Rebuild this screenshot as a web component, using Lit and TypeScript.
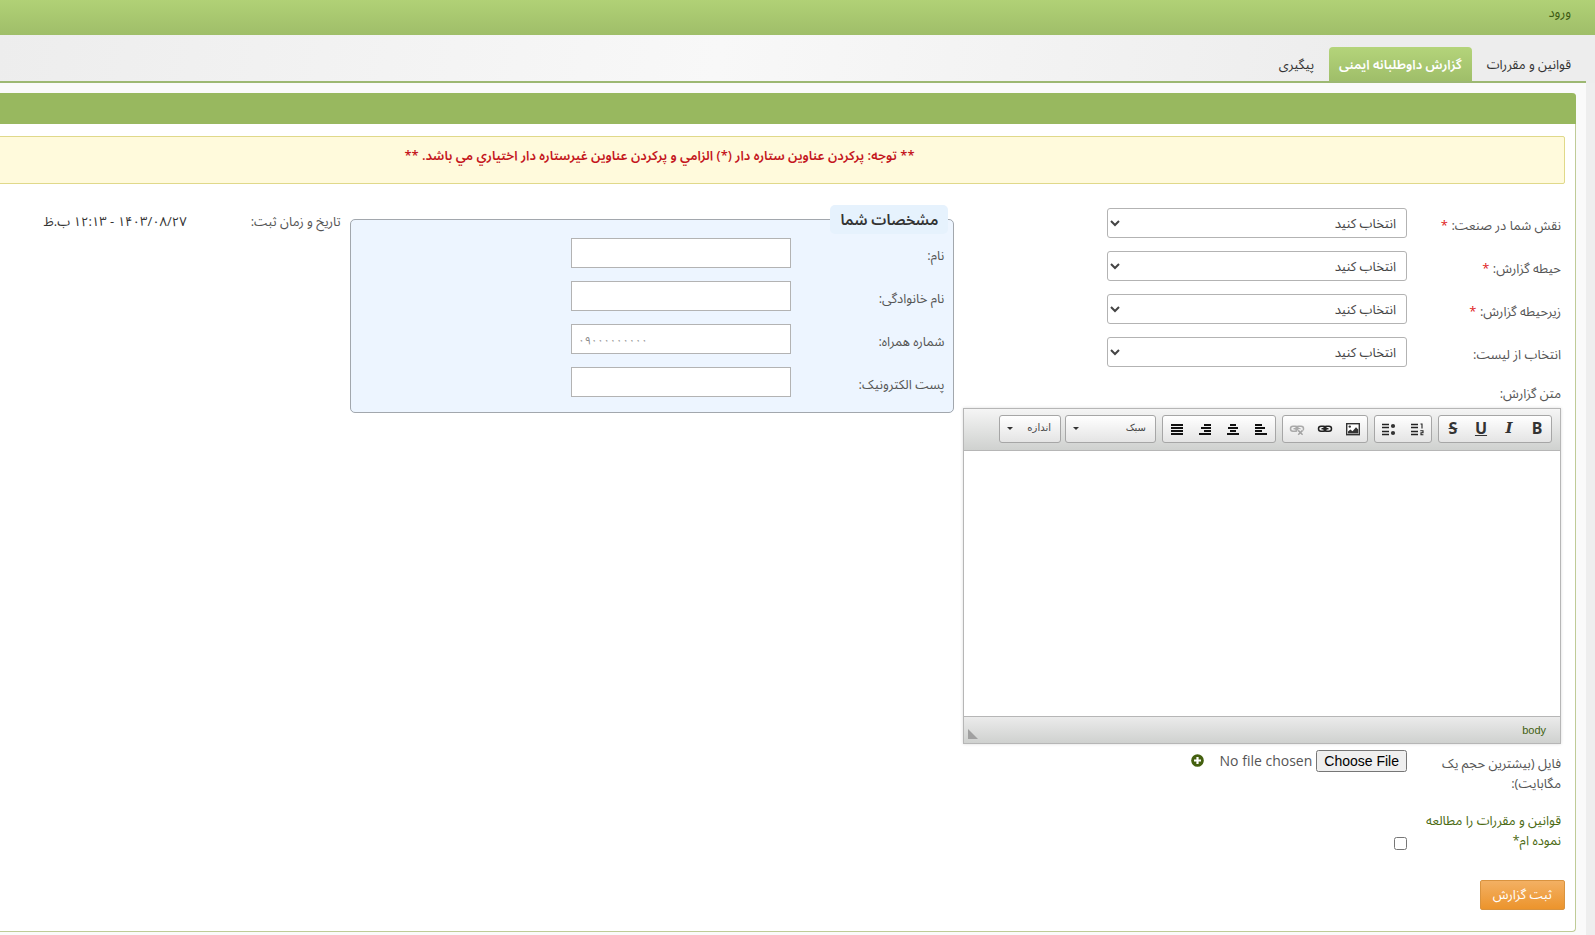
import { LitElement, html, css, svg } from "lit";
import { customElement } from "lit/decorators.js";

const icon = (body: unknown) =>
  html`<svg class="icon" width="16" height="16" viewBox="0 0 16 16" aria-hidden="true">${body}</svg>`;

const bars = (rows: number[][]) =>
  rows.map(([x, w], i) => svg`<rect x=${x} y=${3 + i * 3} width=${w} height="2" fill="#111"/>`);

const chain = (color: string) => svg`
  <g fill="none" stroke=${color} stroke-width="1.5">
    <rect x="1.5" y="5.2" width="7.5" height="5" rx="2.5"/>
    <rect x="7" y="5.2" width="7.5" height="5" rx="2.5"/>
    <path d="M4.5 7.7H11.5"/>
  </g>`;

const icons = {
  numbered: icon(svg`
    <path d="M2 3.5H9M2 6.5H9M2 10.5H9M2 13.5H9" stroke="#222" stroke-width="1.3"/>
    <path d="M11.5 3H13V7.5M11.3 9.8H14V11.8H12V13.7H14.4" fill="none" stroke="#222" stroke-width="1.1"/>`),
  bulleted: icon(svg`
    <path d="M1 3.5H8M1 6.5H8M1 10.5H8M1 13.5H8" stroke="#222" stroke-width="1.3"/>
    <circle cx="12" cy="5" r="2.1" fill="#333"/><circle cx="12" cy="12" r="2.1" fill="#333"/>`),
  image: icon(svg`
    <rect x="1.7" y="2.7" width="12.6" height="11" fill="#fff" stroke="#333" stroke-width="1.4"/>
    <circle cx="4.8" cy="5.6" r="1.2" fill="#333"/>
    <path d="M3 12.6V10.4L5.4 8.6L7.5 10.2L11 6.2L13.2 8.6V12.6Z" fill="#333"/>`),
  link: icon(chain("#222")),
  unlink: icon(svg`${chain("#aaa")}
    <path d="M9 9L14 14M14 9L9 14" stroke="#eee" stroke-width="3.4"/>
    <path d="M9.2 9.4L13.6 13.8M13.6 9.4L9.2 13.8" stroke="#a2a2a2" stroke-width="1.5"/>`),
  left: icon(bars([[2, 7], [2, 10], [2, 7], [2, 12]])),
  center: icon(bars([[5, 6], [3, 10], [5, 6], [2, 12]])),
  right: icon(bars([[7, 7], [4, 10], [7, 7], [2, 12]])),
  justify: icon(bars([[2, 12], [2, 12], [2, 12], [2, 12]])),
};

const roles = [
  { id: "role", label: "نقش شما در صنعت:", required: true },
  { id: "area", label: "حیطه گزارش:", required: true },
  { id: "subarea", label: "زیرحیطه گزارش:", required: true },
  { id: "list", label: "انتخاب از لیست:", required: false },
];

const person = [
  { id: "name", label: "نام:", type: "text", hint: "" },
  { id: "family", label: "نام خانوادگی:", type: "text", hint: "" },
  { id: "mobile", label: "شماره همراه:", type: "tel", hint: "۰۹۰۰۰۰۰۰۰۰۰" },
  { id: "email", label: "پست الکترونیک:", type: "email", hint: "" },
];

@customElement("rich-editor")
class RichEditor extends LitElement {
  static styles = css`
    :host { display: block; border: 1px solid #b6b6b6; box-shadow: 0 0 3px rgba(0, 0, 0, 0.15); background: #fff; }
    .toolbar {
      display: flex; gap: 6px; padding: 6px 8px 7px; border-bottom: 1px solid #b6b6b6;
      background: linear-gradient(#f5f5f5, #cfd1cf);
    }
    .combos { display: flex; gap: 4px; }
    .group, .combo {
      display: flex; box-sizing: border-box; height: 28px; border: 1px solid #a6a6a6; border-radius: 3px;
      background: linear-gradient(#fff, #e4e4e4);
    }
    .tool {
      display: flex; align-items: center; justify-content: center; width: 28px; height: 26px;
      padding: 0; border: 0; background: none; color: #333;
      font: bold 16px/16px "Noto Sans", "Open Sans", sans-serif;
    }
    .letter { padding-bottom: 2px; }
    .italic { font-family: "DejaVu Serif", serif; font-size: 15px; font-style: italic; }
    .underline { text-decoration: underline; }
    .strike { text-decoration: line-through; }
    .combo {
      align-items: center; justify-content: space-between; width: 91px; padding: 0 9px 2px 7px;
      font: 10px/16px "DejaVu Sans", sans-serif; color: #474747;
    }
    .small { width: 62px; }
    .arrow { border: 3px solid transparent; border-top-color: #333; border-bottom: 0; }
    .area {
      display: block; box-sizing: border-box; width: 100%; height: 265px; border: 0; padding: 20px;
      resize: none; background: #fff; outline: 0;
    }
    .status {
      display: flex; justify-content: space-between; align-items: center; height: 26px; padding: 0 14px 0 4px;
      border-top: 1px solid #b6b6b6; background: linear-gradient(#ebebeb, #cfd1cf);
    }
    .path { font: 11px/16px "Liberation Sans", sans-serif; color: #3f5f0f; text-decoration: none; }
    .grip { align-self: flex-end; margin-bottom: 4px; border: 5px solid #a0a0a0; border-top-color: transparent; border-right-color: transparent; }
  `;
  render() {
    return html`
      <div class="toolbar">
        <div class="group">
          <button type="button" class="tool letter">B</button>
          <button type="button" class="tool letter italic">I</button>
          <button type="button" class="tool letter underline">U</button>
          <button type="button" class="tool letter strike">S</button>
        </div>
        <div class="group">
          <button type="button" class="tool" aria-label="فهرست شماره‌دار">${icons.numbered}</button>
          <button type="button" class="tool" aria-label="فهرست نقطه‌ای">${icons.bulleted}</button>
        </div>
        <div class="group">
          <button type="button" class="tool" aria-label="تصویر">${icons.image}</button>
          <button type="button" class="tool" aria-label="پیوند">${icons.link}</button>
          <button type="button" class="tool" aria-label="حذف پیوند" disabled>${icons.unlink}</button>
        </div>
        <div class="group">
          <button type="button" class="tool" aria-label="چپ‌چین">${icons.left}</button>
          <button type="button" class="tool" aria-label="میان‌چین">${icons.center}</button>
          <button type="button" class="tool" aria-label="راست‌چین">${icons.right}</button>
          <button type="button" class="tool" aria-label="بلوک‌چین">${icons.justify}</button>
        </div>
        <div class="combos">
          <button type="button" class="combo">سبک<span class="arrow"></span></button>
          <button type="button" class="combo small">اندازه<span class="arrow"></span></button>
        </div>
      </div>
      <textarea class="area" aria-label="متن گزارش"></textarea>
      <div class="status"><a class="path" href="#body">body</a><span class="grip"></span></div>
    `;
  }
}

@customElement("app-root")
class AppRoot extends LitElement {
  static styles = css`
    :host {
      display: block; direction: rtl; overflow: hidden; min-height: 100vh; background: #eee; color: #333;
      font: 13px/20px "Open Sans", "Noto Sans Arabic", "Vazirmatn", "DejaVu Sans", sans-serif;
    }
    a { text-decoration: none; }
    .top { display: flex; height: 35px; padding: 0 24px; background: linear-gradient(#b1d176, #9fbe69); }
    .top a { padding-top: 2px; color: #3d5a12; }
    .nav { background: linear-gradient(100deg, #ededed, #f8f8f8 45%, #ededed 85%); }
    .tabs {
      display: flex; gap: 5px; margin-inline-start: 9px; padding: 12px 5px 0; border-bottom: 2px solid #9db873;
    }
    .tab { padding: 7px 10px; border-radius: 4px 4px 0 0; color: #333; }
    .active { background: linear-gradient(#b4d47a, #9fbe69); color: #fff; font-weight: 600; }
    .page { margin-inline-start: 9px; padding: 10px 10px 3px 0; background: #fafafa; }
    .panel { margin-inline-end: -257px; border: 1px solid #bfcb97; border-top: 0; border-radius: 4px; background: #fff; }
    .title { height: 31px; margin: 0 -1px; border-radius: 4px 4px 0 0; background: #98b85f; }
    .body { padding: 12px 10px 21px; }
    .notice {
      margin: 0 0 24px; padding: 8px 10px 18px; border: 1px solid #e0d98a; border-radius: 2px; background: #fffadc;
      color: #c4161c; font-weight: 600; text-align: center;
    }
    .form {
      display: grid; align-items: start; gap: 9px; padding: 0 4px;
      grid-template-columns: minmax(0, 598fr) minmax(0, 605fr) minmax(0, 583fr);
    }
    .row { display: grid; grid-template-columns: 154px minmax(0, 1fr); color: #555; }
    .field { height: 30px; margin-bottom: 13px; }
    .field label { padding-top: 7px; }
    .star { color: #e02020; }
    select {
      width: 300px; height: 30px; padding: 0 6px; border: 1px solid #b3b3b3; border-radius: 3px;
      background: #fff; color: #444; font: inherit;
    }
    .caption { display: block; padding: 3px 0 5px; color: #555; }
    .file { margin-top: 6px; }
    .file label { padding-top: 3px; }
    .picker { display: flex; align-items: flex-start; gap: 10px; }
    .picker input { width: 193px; font: 14px/20px "Open Sans", sans-serif; color: #555; }
    .picker input::file-selector-button { height: 22px; font: 14px/16px "Liberation Sans", sans-serif; }
    .add { margin-top: 4px; padding: 0; border: 0; background: none; line-height: 0; }
    .agree { margin-top: 17px; }
    .agree a { color: #4b6a12; }
    .agree input { width: 13px; height: 13px; margin: 27px 0 0; }
    .submit {
      display: block; height: 30px; margin-top: 30px; padding: 0 12px 2px; border: 1px solid #d9933f; border-radius: 2px;
      background: linear-gradient(#f3b063, #ec942c); color: #fff; font: inherit;
    }
    .person {
      min-width: 0; margin: -3px 0 0; padding: 4px 9px 2px; border: 1px solid #a2a7ad; border-radius: 5px; background: #edf5ff;
    }
    .person legend {
      box-sizing: border-box; height: 29px; margin-inline-start: -4px; padding: 2px 10px; border-radius: 5px;
      background: #e6f2fd; color: #333; font-size: 15px; font-weight: 600; line-height: 24px;
    }
    .person .row { grid-template-columns: 153px minmax(0, 1fr); }
    .person input {
      box-sizing: border-box; width: 220px; height: 30px; padding: 0 6px; border: 1px solid #b3b3b3;
      background: #fff; font: inherit; text-align: left;
    }
    .person input::placeholder { color: #888; font-size: 11px; }
    .when { display: grid; grid-template-columns: 154px minmax(0, 1fr); margin: 3px 0 0; color: #555; }
    .when dd { margin: 0; color: #333; }
  `;
  render() {
    return html`
      <header class="top"><a href="#login">ورود</a></header>
      <nav class="nav">
        <div class="tabs">
          <a class="tab" href="#rules">قوانین و مقررات</a>
          <a class="tab active" href="#report">گزارش داوطلبانه ایمنی</a>
          <a class="tab" href="#track">پیگیری</a>
        </div>
      </nav>
      <main class="page">
        <section class="panel">
          <div class="title"></div>
          <div class="body">
            <p class="notice">** توجه: پرکردن عناوین ستاره دار (*) الزامي و پرکردن عناوین غیرستاره دار اختیاري مي باشد. **</p>
            <form class="form" id="report">
              <div>
                ${roles.map((r) => html`
                  <div class="row field">
                    <label for=${r.id}>${r.label} ${r.required ? html`<span class="star">*</span>` : ""}</label>
                    <select id=${r.id}><option>انتخاب کنید</option></select>
                  </div>`)}
                <span class="caption">متن گزارش:</span>
                <rich-editor></rich-editor>
                <div class="row file">
                  <label for="file">فایل (بیشترین حجم یک مگابایت):</label>
                  <div class="picker">
                    <input id="file" type="file" />
                    <button type="button" class="add" aria-label="افزودن فایل">
                      <svg width="13" height="13" viewBox="0 0 13 13">
                        <circle cx="6.5" cy="6.5" r="6.3" fill="#44600f" />
                        <path d="M6.5 3V10M3 6.5H10" stroke="#fff" stroke-width="2.2" />
                      </svg>
                    </button>
                  </div>
                </div>
                <div class="row agree">
                  <label for="agree"><a href="#rules">قوانین و مقررات را مطالعه نموده ام*</a></label>
                  <input id="agree" type="checkbox" />
                </div>
              </div>
              <fieldset class="person">
                <legend>مشخصات شما</legend>
                ${person.map((p) => html`
                  <div class="row field">
                    <label for=${p.id}>${p.label}</label>
                    <input id=${p.id} type=${p.type} placeholder=${p.hint} />
                  </div>`)}
              </fieldset>
              <dl class="when">
                <dt>تاریخ و زمان ثبت:</dt>
                <dd>۱۴۰۳/۰۸/۲۷ - ۱۲:۱۳ ب.ظ</dd>
              </dl>
            </form>
            <button type="submit" form="report" class="submit">ثبت گزارش</button>
          </div>
        </section>
      </main>
    `;
  }
}
